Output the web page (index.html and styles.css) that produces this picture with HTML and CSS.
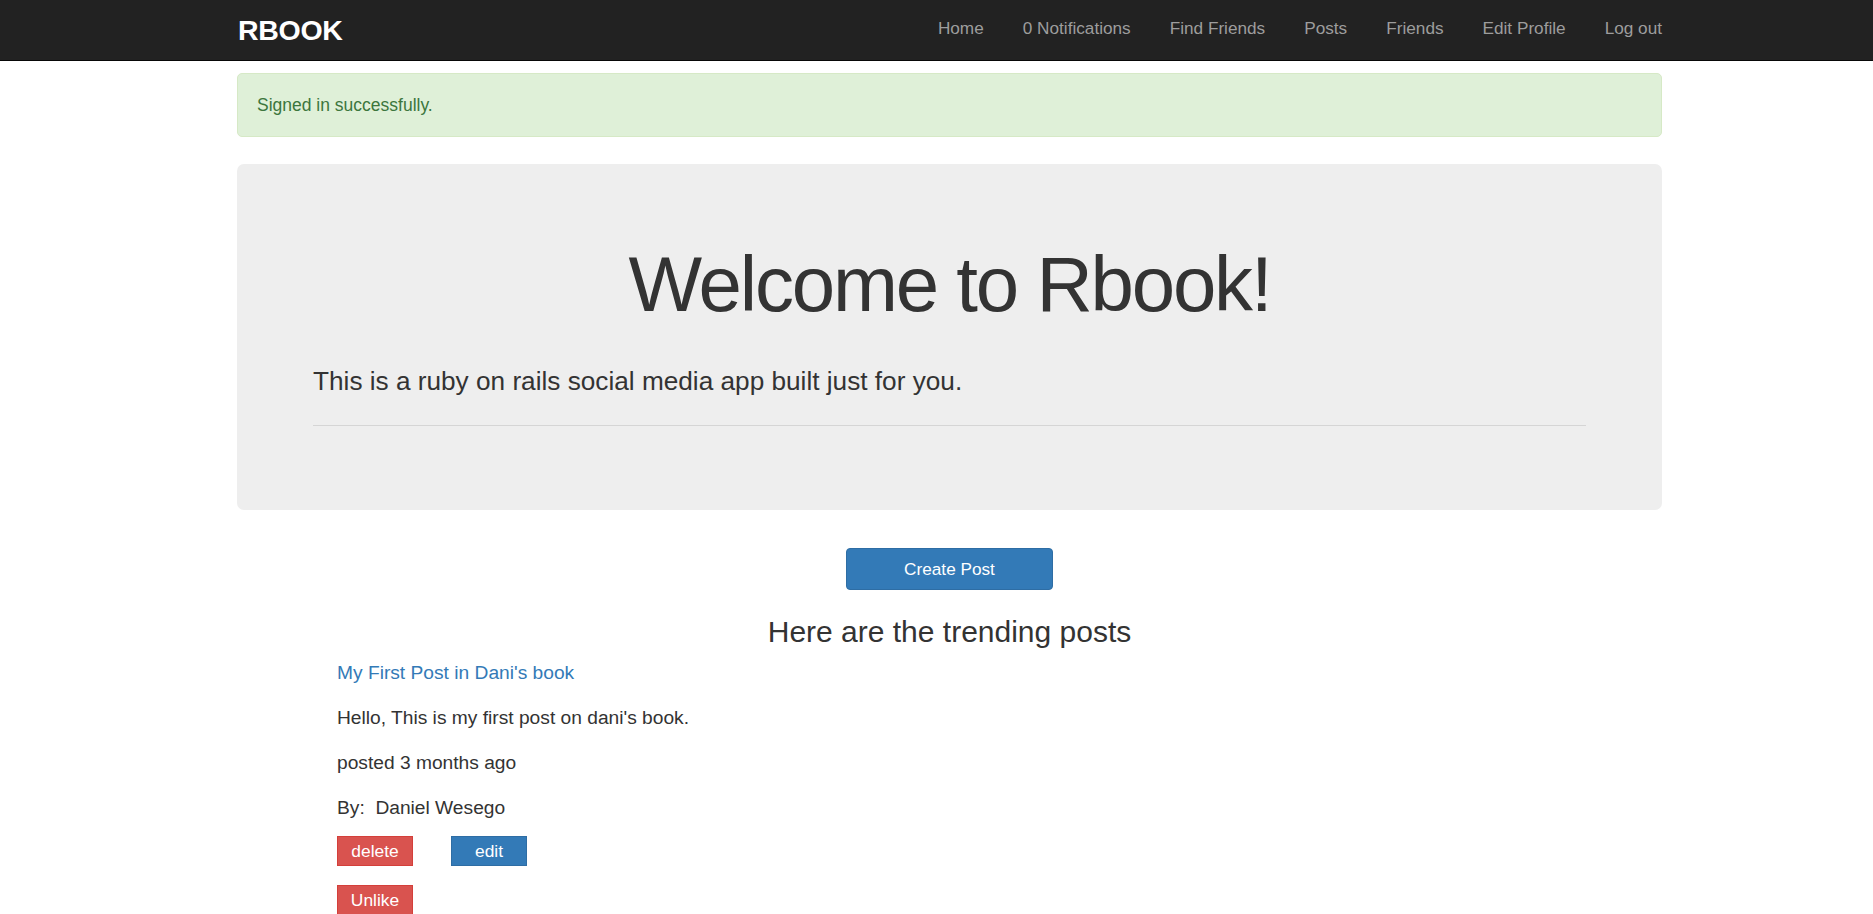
FILE: index.html
```html
<!DOCTYPE html>
<html lang="en">
<head>
<meta charset="utf-8">
<title>Rbook</title>
<link rel="stylesheet" href="styles.css">
</head>
<body>
<nav class="navbar">
  <div class="navbar-inner">
    <a class="brand" href="#">RBOOK</a>
    <ul class="nav-links">
      <li><a href="#">Home</a></li>
      <li><a href="#">0 Notifications</a></li>
      <li><a href="#">Find Friends</a></li>
      <li><a href="#">Posts</a></li>
      <li><a href="#">Friends</a></li>
      <li><a href="#">Edit Profile</a></li>
      <li><a href="#">Log out</a></li>
    </ul>
  </div>
</nav>
<main class="container">
  <div class="alert">Signed in successfully.</div>
  <section class="jumbotron">
    <h1 class="jumbo-title">Welcome to Rbook!</h1>
    <p class="lead">This is a ruby on rails social media app built just for you.</p>
    <hr class="jumbo-rule">
  </section>
  <a class="btn-create" href="#">Create Post</a>
  <h3 class="trending-title">Here are the trending posts</h3>
  <section class="posts">
    <article class="post">
      <p class="post-line"><a class="post-title" href="#">My First Post in Dani's book</a></p>
      <p class="post-line">Hello, This is my first post on dani's book.</p>
      <p class="post-line">posted 3 months ago</p>
      <p class="post-line">By:&nbsp; Daniel Wesego</p>
      <div class="post-actions">
        <button class="btn btn-danger" type="button">delete</button>
        <button class="btn btn-primary" type="button">edit</button>
      </div>
      <div class="post-like">
        <button class="btn btn-danger" type="button">Unlike</button>
      </div>
    </article>
  </section>
</main>
</body>
</html>
```

FILE: styles.css
```css
* { box-sizing: border-box; }

body {
  margin: 0;
  font-family: "Liberation Sans", Arial, Helvetica, sans-serif;
  color: #333333;
  background: #ffffff;
  font-size: 17px;
  line-height: 1.42857;
  overflow: hidden;
}

a { text-decoration: none; }

.navbar {
  background: #222222;
  border-bottom: 1px solid #080808;
  height: 61px;
}

.navbar-inner {
  width: 1425px;
  margin-left: 237px;
  height: 60px;
  display: flex;
  align-items: center;
  justify-content: space-between;
}

.brand {
  color: #ffffff;
  font-weight: bold;
  font-size: 28.5px;
  letter-spacing: -0.3px;
  padding-left: 1px;
  line-height: 1;
}

.nav-links {
  list-style: none;
  margin: 0;
  padding: 0;
  display: flex;
  gap: 39px;
  padding-bottom: 2px;
}

.nav-links a {
  color: #9d9d9d;
  font-size: 17.2px;
}

.container {
  width: 1425px;
  margin-left: 237px;
}

.alert {
  margin-top: 12px;
  padding: 19px 19px;
  border: 1px solid #d6e9c6;
  background: #dff0d8;
  color: #3c763d;
  border-radius: 5px;
  font-size: 17.5px;
  line-height: 24px;
}

.jumbotron {
  margin-top: 27px;
  background: #eeeeee;
  border-radius: 7px;
  padding: 78px 76px 84px;
}

.jumbo-title {
  margin: 0 0 35px;
  text-align: center;
  font-weight: 500;
  font-size: 78px;
  letter-spacing: -2.2px;
  line-height: 1.1;
  color: #333333;
}

.lead {
  margin: 0 0 26px;
  font-size: 26.2px;
  line-height: 1.4;
  font-weight: 300;
}

.jumbo-rule {
  margin: 0;
  border: 0;
  border-top: 1px solid #d5d5d5;
}

.btn-create {
  display: block;
  width: 207px;
  height: 42px;
  margin: 38px auto 0;
  background: #337ab7;
  border: 1px solid #2e6da4;
  border-radius: 4px;
  color: #ffffff;
  font-size: 17.2px;
  line-height: 40px;
  text-align: center;
}

.trending-title {
  margin: 25px 0 0;
  text-align: center;
  font-size: 30px;
  font-weight: 500;
  line-height: 1.1;
}

.posts {
  padding-left: 100px;
  margin-top: 11px;
}

.post-line {
  margin: 0 0 17.3px;
  font-size: 19.2px;
  line-height: 27.4px;
}

.post-title { color: #337ab7; }

.post-actions {
  display: flex;
  gap: 38px;
  margin-top: -2px;
}

.post-like { margin-top: 19px; }

.btn {
  width: 76px;
  height: 30px;
  padding: 0;
  border: 1px solid;
  border-radius: 0;
  color: #ffffff;
  font-family: "Liberation Sans", Arial, sans-serif;
  font-size: 17.4px;
  line-height: 28px;
  text-align: center;
}

.btn-danger { background: #d9534f; border-color: #d43f3a; }
.btn-primary { background: #337ab7; border-color: #2e6da4; }
```
